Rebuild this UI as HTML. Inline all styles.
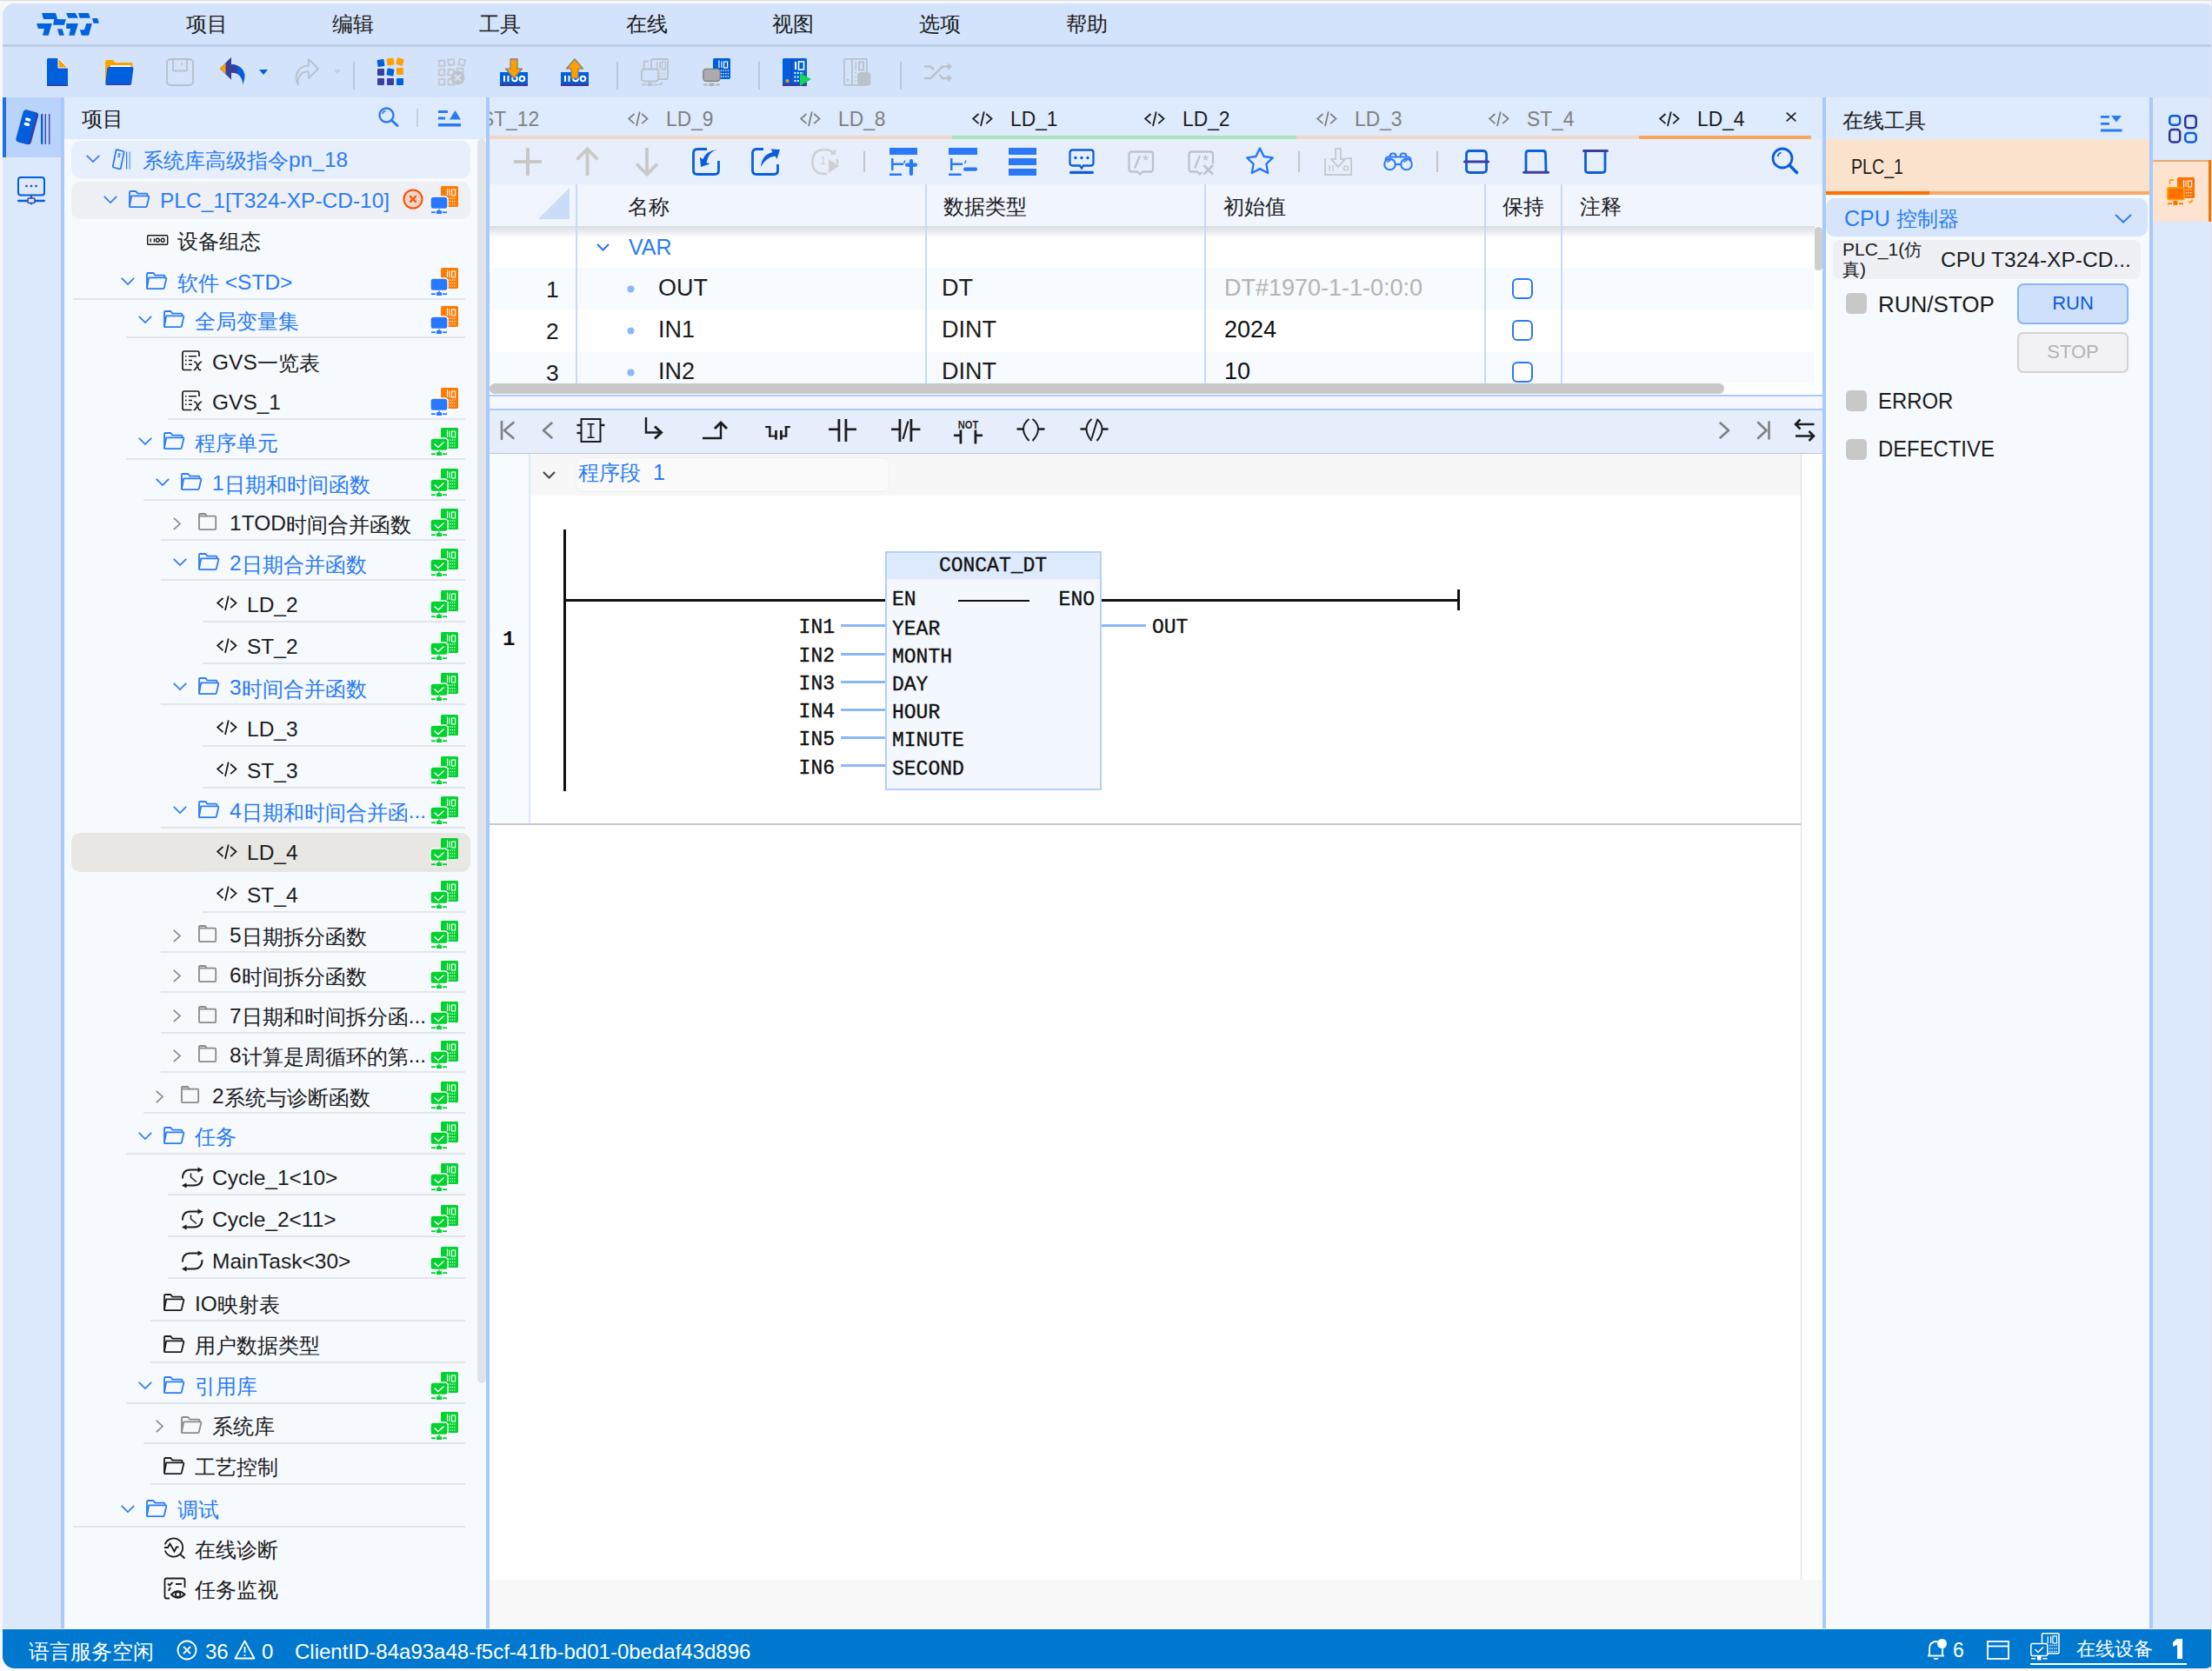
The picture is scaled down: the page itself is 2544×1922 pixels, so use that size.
<!DOCTYPE html>
<html><head><meta charset="utf-8">
<style>
*{margin:0;padding:0;box-sizing:border-box}
html,body{width:2544px;height:1922px;overflow:hidden;background:#f7f7f7;font-family:"Liberation Sans",sans-serif;color:#1c1c1c}
.a{position:absolute}
.t{position:absolute;white-space:nowrap;line-height:1}
svg{position:absolute;overflow:visible}
.m{font-family:"Liberation Mono",monospace}
</style></head><body>
<svg width="0" height="0" style="position:absolute">
<defs>
<symbol id="chd" overflow="visible"><polyline points="0.8,0.8 8,8 15.2,0.8" fill="none" stroke="currentColor" stroke-width="1.7"/></symbol>
<symbol id="chr" overflow="visible"><polyline points="0.8,0.8 8,7.5 0.8,14.2" fill="none" stroke="currentColor" stroke-width="1.7"/></symbol>
<symbol id="fo" overflow="visible"><g fill="none" stroke="currentColor" stroke-width="1.8" stroke-linejoin="round"><path d="M1 18.5V2.2Q1 1 2.2 1H8.3L10.3 3.6H20.3Q21.5 3.6 21.5 4.8V6.4"/><path d="M3.2 6.4H22.3Q23.6 6.4 23.3 7.7L20.8 18.2Q20.5 19.2 19.4 19.2H2.2Q0.8 19.2 1.1 17.9Z"/></g></symbol>
<symbol id="fc" overflow="visible"><g fill="none" stroke="currentColor" stroke-width="1.8" stroke-linejoin="round"><path d="M1 18V2.2Q1 1 2.2 1H8L9.8 3.6H19Q20.2 3.6 20.2 4.8V18Q20.2 19.2 19 19.2H2.2Q1 19.2 1 18Z"/><path d="M1 3.6H9.8"/></g></symbol>
<symbol id="code" overflow="visible"><g fill="none" stroke="currentColor" stroke-width="1.8"><polyline points="7.5,3 1.2,8.6 7.5,14.2"/><line x1="13.8" y1="0.5" x2="10" y2="17"/><polyline points="16.2,3 22.5,8.6 16.2,14.2"/></g></symbol>
<symbol id="stbo" overflow="visible"><rect x="12" y="0" width="20" height="24" rx="1.5" fill="#ff7a00"/><g stroke="#fff" stroke-width="1.1" fill="none"><line x1="19.5" y1="2.5" x2="19.5" y2="11"/><line x1="22" y1="3.5" x2="22" y2="11"/><rect x="24.6" y="4" width="4" height="7"/></g><g stroke="#fff" stroke-width="1.2" stroke-dasharray="1.2 1.2"><line x1="20" y1="14.2" x2="29" y2="14.2"/><line x1="20" y1="17.6" x2="29" y2="17.6"/><line x1="20" y1="21" x2="29" y2="21"/></g><rect x="0" y="12" width="20" height="14.5" rx="3.5" fill="#2878ff" stroke="#fff" stroke-width="1.3"/><rect x="9.2" y="26.5" width="1.6" height="2" fill="#2878ff"/><rect x="7" y="28.2" width="6" height="3.8" fill="#2878ff"/><rect x="1" y="29.3" width="5" height="1.8" fill="#2878ff"/><rect x="14" y="29.3" width="5" height="1.8" fill="#2878ff"/></symbol>
<symbol id="stg" overflow="visible"><rect x="12" y="0" width="20" height="24" rx="1.5" fill="#00d22e"/><g stroke="#fff" stroke-width="1.1" fill="none"><line x1="19.5" y1="2.5" x2="19.5" y2="11"/><line x1="22" y1="3.5" x2="22" y2="11"/><rect x="24.6" y="4" width="4" height="7"/></g><g stroke="#fff" stroke-width="1.2" stroke-dasharray="1.2 1.2"><line x1="20" y1="14.2" x2="29" y2="14.2"/><line x1="20" y1="17.6" x2="29" y2="17.6"/><line x1="20" y1="21" x2="29" y2="21"/></g><rect x="0" y="12" width="20" height="14.5" rx="3.5" fill="#00d22e" stroke="#fff" stroke-width="1.3"/><polyline points="4.5,18.5 9,22.5 15.5,16.5" fill="none" stroke="#fff" stroke-width="1.5"/><rect x="9.2" y="26.5" width="1.6" height="2" fill="#00d22e"/><rect x="7" y="28.2" width="6" height="3.8" fill="#00d22e"/><rect x="1" y="29.3" width="5" height="1.8" fill="#00d22e"/><rect x="14" y="29.3" width="5" height="1.8" fill="#00d22e"/></symbol>
</defs></svg>

<div class="a" style="left:0px;top:0px;width:2544px;height:1px;background:#dcdcdc;"></div>
<div class="a" style="left:3px;top:4px;width:2546px;height:1915px;border-radius:14px;overflow:hidden;background:#d3e3fb"></div>
<div class="a" style="left:3px;top:51px;width:2540px;height:3px;background:#bccde6;"></div>
<div class="a" style="left:3px;top:112px;width:67px;height:1762px;background:#dce8fc;"></div>
<div class="a" style="left:3px;top:112px;width:67px;height:69px;background:#b9d3fa;"></div>
<div class="a" style="left:3px;top:112px;width:4px;height:69px;background:#1f6fe5;"></div>
<div class="a" style="left:70px;top:112px;width:4px;height:1762px;background:#a9c9fb;"></div>
<div class="a" style="left:74px;top:112px;width:485px;height:48px;background:#deeafd;"></div>
<div class="a" style="left:74px;top:160px;width:485px;height:1714px;background:#f6f9fe;"></div>
<div class="a" style="left:549px;top:160px;width:10px;height:1431px;background:#e1e3ea;border-radius:5px"></div>
<div class="a" style="left:559px;top:112px;width:4px;height:1762px;background:#a9c9fb;"></div>
<div class="a" style="left:563px;top:112px;width:1533px;height:48px;background:#deeafd;"></div>
<div class="a" style="left:563px;top:160px;width:1533px;height:52px;background:#e7effc;"></div>
<div class="a" style="left:563px;top:212px;width:1533px;height:48px;background:#f0f5fe;"></div>
<div class="a" style="left:563px;top:260px;width:1533px;height:194px;background:#ffffff;"></div>
<div class="a" style="left:563px;top:454px;width:1533px;height:18px;background:#f5f9ff;border-top:2px solid #a9c9fb;border-bottom:2px solid #a9c9fb"></div>
<div class="a" style="left:563px;top:472px;width:1533px;height:50px;background:#e6eefc;"></div>
<div class="a" style="left:563px;top:522px;width:1533px;height:1295px;background:#ffffff;"></div>
<div class="a" style="left:563px;top:1817px;width:1533px;height:57px;background:#f8f8f8;"></div>
<div class="a" style="left:2096px;top:112px;width:4px;height:1762px;background:#a9c9fb;"></div>
<div class="a" style="left:2100px;top:112px;width:372px;height:48px;background:#deeafd;"></div>
<div class="a" style="left:2100px;top:160px;width:372px;height:64px;background:#fbe2cc;"></div>
<div class="a" style="left:2100px;top:224px;width:372px;height:1650px;background:#f6f9fe;"></div>
<div class="a" style="left:2472px;top:112px;width:4px;height:1762px;background:#a9c9fb;"></div>
<div class="a" style="left:2476px;top:112px;width:67px;height:1762px;background:#dce8fc;"></div>
<div class="a" style="left:3px;top:1874px;width:2546px;height:45px;background:#0078d0;border-radius:0 0 14px 14px"></div>
<div class="t" style="left:213.5px;top:16px;font-size:24px;color:#1c1c1c;">项目</div>
<div class="t" style="left:382.2px;top:16px;font-size:24px;color:#1c1c1c;">编辑</div>
<div class="t" style="left:550.9px;top:16px;font-size:24px;color:#1c1c1c;">工具</div>
<div class="t" style="left:719.6px;top:16px;font-size:24px;color:#1c1c1c;">在线</div>
<div class="t" style="left:888.3px;top:16px;font-size:24px;color:#1c1c1c;">视图</div>
<div class="t" style="left:1057.0px;top:16px;font-size:24px;color:#1c1c1c;">选项</div>
<div class="t" style="left:1225.7px;top:16px;font-size:24px;color:#1c1c1c;">帮助</div>
<div class="a" style="left:82px;top:162px;width:459px;height:43px;background:#e8effc;border-radius:10px"></div>
<div class="a" style="left:82px;top:209px;width:459px;height:43px;background:#eef0f5;border-radius:10px"></div>
<div class="a" style="left:82px;top:958px;width:459px;height:45px;background:#e8e7e4;border-radius:10px"></div>
<svg style="left:99px;top:177.5px;color:#2a7cf6" width="16" height="9"><use href="#chd"/></svg>
<svg style="left:129px;top:171px;" width="23" height="25" viewBox="0 0 23 25"><g fill="none" stroke="#2a7cf6" stroke-width="1.8"><path d="M5.5 1.2L12.8 3Q13.8 3.3 13.6 4.3L9.8 22.6Q9.6 23.6 8.6 23.3L1.6 21.5Q0.6 21.2 0.8 20.2L4.5 1.9Q4.7 1 5.5 1.2Z"/><path d="M7 6L9.6 6.6M6.5 8.5L9 9.1"/><line x1="16.6" y1="3.5" x2="16.6" y2="23.5" stroke-width="1.3"/></g><rect x="19" y="3.5" width="2.3" height="20" fill="#93bbf8"/></svg>
<div class="t" style="left:164px;top:173.0px;font-size:23.5px;color:#2a7cf6;">系统库高级指令<span style="font-size:24.5px;position:relative;top:-1.5px">pn_18</span></div>
<svg style="left:119px;top:224.5px;color:#2a7cf6" width="16" height="9"><use href="#chd"/></svg>
<svg style="left:148px;top:218.5px;color:#2a7cf6" width="24" height="20"><use href="#fo"/></svg>
<div class="t" style="left:184px;top:220.0px;font-size:23.5px;color:#2a7cf6;"><span style="font-size:24.5px;position:relative;top:-1.5px">PLC_1[T324-XP-CD-10]</span></div>
<svg style="left:495px;top:214px;" width="32" height="32" viewBox="0 0 32 32"><use href="#stbo"/></svg>
<svg style="left:169px;top:270px;" width="24" height="12" viewBox="0 0 24 12"><g fill="none" stroke="#1c1c1c" stroke-width="1.4"><rect x="0.7" y="0.7" width="23" height="10.6" rx="1"/><path d="M4.2 4.2V8.6M8.4 4.2V8.6"/><circle cx="12.3" cy="6.3" r="2"/><circle cx="18.2" cy="6.3" r="2"/></g></svg>
<div class="t" style="left:204px;top:267.0px;font-size:23.5px;color:#1c1c1c;">设备组态</div>
<div class="a" style="left:84px;top:343px;width:451px;height:2px;background:#e1e4ea;"></div>
<svg style="left:139px;top:318.6px;color:#2a7cf6" width="16" height="9"><use href="#chd"/></svg>
<svg style="left:168px;top:312.6px;color:#2a7cf6" width="24" height="20"><use href="#fo"/></svg>
<div class="t" style="left:204px;top:314.1px;font-size:23.5px;color:#2a7cf6;">软件<span style="font-size:24.5px;position:relative;top:-1.5px"> &lt;STD&gt;</span></div>
<svg style="left:495px;top:308px;" width="32" height="32" viewBox="0 0 32 32"><use href="#stbo"/></svg>
<div class="a" style="left:145px;top:387px;width:390px;height:2px;background:#e1e4ea;"></div>
<svg style="left:159px;top:363.2px;color:#2a7cf6" width="16" height="9"><use href="#chd"/></svg>
<svg style="left:188px;top:357.2px;color:#2a7cf6" width="24" height="20"><use href="#fo"/></svg>
<div class="t" style="left:224px;top:358.7px;font-size:23.5px;color:#2a7cf6;">全局变量集</div>
<svg style="left:495px;top:352px;" width="32" height="32" viewBox="0 0 32 32"><use href="#stbo"/></svg>
<svg style="left:209px;top:403.0px;" width="25" height="25" viewBox="0 0 25 25"><g fill="none" stroke="#1c1c1c" stroke-width="1.7"><path d="M11.5 22.5H3Q1 22.5 1 20.5V3Q1 1 3 1H18Q20 1 20 3V7"/><path d="M8 6.8H17M8 11.5H12M8 16.2H12" stroke-width="1.6"/></g><g fill="#1c1c1c"><circle cx="4.8" cy="6.8" r="0.9"/><circle cx="4.8" cy="11.5" r="0.9"/><circle cx="4.8" cy="16.2" r="0.9"/></g><path d="M14 13.5Q16.2 12.5 17.3 15.5L19.3 21Q20.3 23.5 22.3 22.2M23.2 13.5Q21.3 12.8 19.8 15.5L16.5 20.5Q15 23.2 13.8 22" fill="none" stroke="#1c1c1c" stroke-width="1.6"/></svg>
<div class="t" style="left:244px;top:406.0px;font-size:23.5px;color:#1c1c1c;"><span style="font-size:24.5px;position:relative;top:-1.5px">GVS</span>一览表</div>
<div class="a" style="left:193px;top:481px;width:342px;height:2px;background:#e1e4ea;"></div>
<svg style="left:209px;top:449.3px;" width="25" height="25" viewBox="0 0 25 25"><g fill="none" stroke="#1c1c1c" stroke-width="1.7"><path d="M11.5 22.5H3Q1 22.5 1 20.5V3Q1 1 3 1H18Q20 1 20 3V7"/><path d="M8 6.8H17M8 11.5H12M8 16.2H12" stroke-width="1.6"/></g><g fill="#1c1c1c"><circle cx="4.8" cy="6.8" r="0.9"/><circle cx="4.8" cy="11.5" r="0.9"/><circle cx="4.8" cy="16.2" r="0.9"/></g><path d="M14 13.5Q16.2 12.5 17.3 15.5L19.3 21Q20.3 23.5 22.3 22.2M23.2 13.5Q21.3 12.8 19.8 15.5L16.5 20.5Q15 23.2 13.8 22" fill="none" stroke="#1c1c1c" stroke-width="1.6"/></svg>
<div class="t" style="left:244px;top:452.3px;font-size:23.5px;color:#1c1c1c;"><span style="font-size:24.5px;position:relative;top:-1.5px">GVS_1</span></div>
<svg style="left:495px;top:446px;" width="32" height="32" viewBox="0 0 32 32"><use href="#stbo"/></svg>
<div class="a" style="left:145px;top:527px;width:390px;height:2px;background:#e1e4ea;"></div>
<svg style="left:159px;top:503.20000000000005px;color:#2a7cf6" width="16" height="9"><use href="#chd"/></svg>
<svg style="left:188px;top:497.20000000000005px;color:#2a7cf6" width="24" height="20"><use href="#fo"/></svg>
<div class="t" style="left:224px;top:498.70000000000005px;font-size:23.5px;color:#2a7cf6;">程序单元</div>
<svg style="left:495px;top:492px;" width="32" height="32" viewBox="0 0 32 32"><use href="#stg"/></svg>
<div class="a" style="left:165px;top:574px;width:370px;height:2px;background:#e1e4ea;"></div>
<svg style="left:179px;top:550.3px;color:#2a7cf6" width="16" height="9"><use href="#chd"/></svg>
<svg style="left:208px;top:544.3px;color:#2a7cf6" width="24" height="20"><use href="#fo"/></svg>
<div class="t" style="left:244px;top:545.8px;font-size:23.5px;color:#2a7cf6;"><span style="font-size:24.5px;position:relative;top:-1.5px">1</span>日期和时间函数</div>
<svg style="left:495px;top:539px;" width="32" height="32" viewBox="0 0 32 32"><use href="#stg"/></svg>
<div class="a" style="left:185px;top:620px;width:350px;height:2px;background:#e1e4ea;"></div>
<svg style="left:199px;top:594.8px;color:#8a8a8a" width="9" height="15"><use href="#chr"/></svg>
<svg style="left:228px;top:590.3px;color:#8a8a8a" width="21" height="20"><use href="#fc"/></svg>
<div class="t" style="left:264px;top:591.8px;font-size:23.5px;color:#1c1c1c;"><span style="font-size:24.5px;position:relative;top:-1.5px">1TOD</span>时间合并函数</div>
<svg style="left:495px;top:585px;" width="32" height="32" viewBox="0 0 32 32"><use href="#stg"/></svg>
<div class="a" style="left:185px;top:666px;width:350px;height:2px;background:#e1e4ea;"></div>
<svg style="left:199px;top:642.4px;color:#2a7cf6" width="16" height="9"><use href="#chd"/></svg>
<svg style="left:228px;top:636.4px;color:#2a7cf6" width="24" height="20"><use href="#fo"/></svg>
<div class="t" style="left:264px;top:637.9px;font-size:23.5px;color:#2a7cf6;"><span style="font-size:24.5px;position:relative;top:-1.5px">2</span>日期合并函数</div>
<svg style="left:495px;top:631px;" width="32" height="32" viewBox="0 0 32 32"><use href="#stg"/></svg>
<div class="a" style="left:233px;top:714px;width:302px;height:2px;background:#e1e4ea;"></div>
<svg style="left:249px;top:685.3px;color:#1c1c1c" width="24" height="17"><use href="#code"/></svg>
<div class="t" style="left:284px;top:685.3px;font-size:23.5px;color:#1c1c1c;"><span style="font-size:24.5px;position:relative;top:-1.5px">LD_2</span></div>
<svg style="left:495px;top:679px;" width="32" height="32" viewBox="0 0 32 32"><use href="#stg"/></svg>
<div class="a" style="left:233px;top:762px;width:302px;height:2px;background:#e1e4ea;"></div>
<svg style="left:249px;top:733.5px;color:#1c1c1c" width="24" height="17"><use href="#code"/></svg>
<div class="t" style="left:284px;top:733.5px;font-size:23.5px;color:#1c1c1c;"><span style="font-size:24.5px;position:relative;top:-1.5px">ST_2</span></div>
<svg style="left:495px;top:727px;" width="32" height="32" viewBox="0 0 32 32"><use href="#stg"/></svg>
<div class="a" style="left:185px;top:809px;width:350px;height:2px;background:#e1e4ea;"></div>
<svg style="left:199px;top:785.1px;color:#2a7cf6" width="16" height="9"><use href="#chd"/></svg>
<svg style="left:228px;top:779.1px;color:#2a7cf6" width="24" height="20"><use href="#fo"/></svg>
<div class="t" style="left:264px;top:780.6px;font-size:23.5px;color:#2a7cf6;"><span style="font-size:24.5px;position:relative;top:-1.5px">3</span>时间合并函数</div>
<svg style="left:495px;top:774px;" width="32" height="32" viewBox="0 0 32 32"><use href="#stg"/></svg>
<div class="a" style="left:233px;top:857px;width:302px;height:2px;background:#e1e4ea;"></div>
<svg style="left:249px;top:828.3px;color:#1c1c1c" width="24" height="17"><use href="#code"/></svg>
<div class="t" style="left:284px;top:828.3px;font-size:23.5px;color:#1c1c1c;"><span style="font-size:24.5px;position:relative;top:-1.5px">LD_3</span></div>
<svg style="left:495px;top:822px;" width="32" height="32" viewBox="0 0 32 32"><use href="#stg"/></svg>
<div class="a" style="left:233px;top:905px;width:302px;height:2px;background:#e1e4ea;"></div>
<svg style="left:249px;top:876.2px;color:#1c1c1c" width="24" height="17"><use href="#code"/></svg>
<div class="t" style="left:284px;top:876.2px;font-size:23.5px;color:#1c1c1c;"><span style="font-size:24.5px;position:relative;top:-1.5px">ST_3</span></div>
<svg style="left:495px;top:870px;" width="32" height="32" viewBox="0 0 32 32"><use href="#stg"/></svg>
<div class="a" style="left:185px;top:951px;width:350px;height:2px;background:#e1e4ea;"></div>
<svg style="left:199px;top:927.3px;color:#2a7cf6" width="16" height="9"><use href="#chd"/></svg>
<svg style="left:228px;top:921.3px;color:#2a7cf6" width="24" height="20"><use href="#fo"/></svg>
<div class="t" style="left:264px;top:922.8px;font-size:23.5px;color:#2a7cf6;"><span style="font-size:24.5px;position:relative;top:-1.5px">4</span>日期和时间合并函<span style="font-size:24.5px;position:relative;top:-1.5px">...</span></div>
<svg style="left:495px;top:916px;" width="32" height="32" viewBox="0 0 32 32"><use href="#stg"/></svg>
<div class="a" style="left:233px;top:999px;width:302px;height:2px;background:#e1e4ea;"></div>
<svg style="left:249px;top:970.5px;color:#1c1c1c" width="24" height="17"><use href="#code"/></svg>
<div class="t" style="left:284px;top:970.5px;font-size:23.5px;color:#1c1c1c;"><span style="font-size:24.5px;position:relative;top:-1.5px">LD_4</span></div>
<svg style="left:495px;top:964px;" width="32" height="32" viewBox="0 0 32 32"><use href="#stg"/></svg>
<div class="a" style="left:233px;top:1048px;width:302px;height:2px;background:#e1e4ea;"></div>
<svg style="left:249px;top:1019.2px;color:#1c1c1c" width="24" height="17"><use href="#code"/></svg>
<div class="t" style="left:284px;top:1019.2px;font-size:23.5px;color:#1c1c1c;"><span style="font-size:24.5px;position:relative;top:-1.5px">ST_4</span></div>
<svg style="left:495px;top:1013px;" width="32" height="32" viewBox="0 0 32 32"><use href="#stg"/></svg>
<div class="a" style="left:185px;top:1094px;width:350px;height:2px;background:#e1e4ea;"></div>
<svg style="left:199px;top:1068.8px;color:#8a8a8a" width="9" height="15"><use href="#chr"/></svg>
<svg style="left:228px;top:1064.3px;color:#8a8a8a" width="21" height="20"><use href="#fc"/></svg>
<div class="t" style="left:264px;top:1065.8px;font-size:23.5px;color:#1c1c1c;"><span style="font-size:24.5px;position:relative;top:-1.5px">5</span>日期拆分函数</div>
<svg style="left:495px;top:1059px;" width="32" height="32" viewBox="0 0 32 32"><use href="#stg"/></svg>
<div class="a" style="left:185px;top:1140px;width:350px;height:2px;background:#e1e4ea;"></div>
<svg style="left:199px;top:1114.9px;color:#8a8a8a" width="9" height="15"><use href="#chr"/></svg>
<svg style="left:228px;top:1110.4px;color:#8a8a8a" width="21" height="20"><use href="#fc"/></svg>
<div class="t" style="left:264px;top:1111.9px;font-size:23.5px;color:#1c1c1c;"><span style="font-size:24.5px;position:relative;top:-1.5px">6</span>时间拆分函数</div>
<svg style="left:495px;top:1105px;" width="32" height="32" viewBox="0 0 32 32"><use href="#stg"/></svg>
<div class="a" style="left:185px;top:1187px;width:350px;height:2px;background:#e1e4ea;"></div>
<svg style="left:199px;top:1161.0px;color:#8a8a8a" width="9" height="15"><use href="#chr"/></svg>
<svg style="left:228px;top:1156.5px;color:#8a8a8a" width="21" height="20"><use href="#fc"/></svg>
<div class="t" style="left:264px;top:1158.0px;font-size:23.5px;color:#1c1c1c;"><span style="font-size:24.5px;position:relative;top:-1.5px">7</span>日期和时间拆分函<span style="font-size:24.5px;position:relative;top:-1.5px">...</span></div>
<svg style="left:495px;top:1152px;" width="32" height="32" viewBox="0 0 32 32"><use href="#stg"/></svg>
<div class="a" style="left:185px;top:1232px;width:350px;height:2px;background:#e1e4ea;"></div>
<svg style="left:199px;top:1206.5px;color:#8a8a8a" width="9" height="15"><use href="#chr"/></svg>
<svg style="left:228px;top:1202px;color:#8a8a8a" width="21" height="20"><use href="#fc"/></svg>
<div class="t" style="left:264px;top:1203.5px;font-size:23.5px;color:#1c1c1c;"><span style="font-size:24.5px;position:relative;top:-1.5px">8</span>计算是周循环的第<span style="font-size:24.5px;position:relative;top:-1.5px">...</span></div>
<svg style="left:495px;top:1197px;" width="32" height="32" viewBox="0 0 32 32"><use href="#stg"/></svg>
<div class="a" style="left:165px;top:1279px;width:370px;height:2px;background:#e1e4ea;"></div>
<svg style="left:179px;top:1253.9px;color:#8a8a8a" width="9" height="15"><use href="#chr"/></svg>
<svg style="left:208px;top:1249.4px;color:#8a8a8a" width="21" height="20"><use href="#fc"/></svg>
<div class="t" style="left:244px;top:1250.9px;font-size:23.5px;color:#1c1c1c;"><span style="font-size:24.5px;position:relative;top:-1.5px">2</span>系统与诊断函数</div>
<svg style="left:495px;top:1244px;" width="32" height="32" viewBox="0 0 32 32"><use href="#stg"/></svg>
<div class="a" style="left:145px;top:1326px;width:390px;height:2px;background:#e1e4ea;"></div>
<svg style="left:159px;top:1301.5px;color:#2a7cf6" width="16" height="9"><use href="#chd"/></svg>
<svg style="left:188px;top:1295.5px;color:#2a7cf6" width="24" height="20"><use href="#fo"/></svg>
<div class="t" style="left:224px;top:1297.0px;font-size:23.5px;color:#2a7cf6;">任务</div>
<svg style="left:495px;top:1290px;" width="32" height="32" viewBox="0 0 32 32"><use href="#stg"/></svg>
<div class="a" style="left:193px;top:1373px;width:342px;height:2px;background:#e1e4ea;"></div>
<svg style="left:209px;top:1343.4px;" width="25" height="25" viewBox="0 0 25 25"><g fill="none" stroke="#1c1c1c" stroke-width="1.9"><path d="M1 12.5Q1 2.5 10 2.5H20"/><path d="M23.5 10Q23.5 20.5 14 20.5H4"/><path d="M10.5 6.5V11L17 16.5" stroke-width="1.5"/></g><g fill="#1c1c1c"><polygon points="18.5,-0.5 24.2,2.5 18.5,5.5"/><polygon points="5.5,17.5 0,20.5 5.5,23.5"/></g></svg>
<div class="t" style="left:244px;top:1344.9px;font-size:23.5px;color:#1c1c1c;"><span style="font-size:24.5px;position:relative;top:-1.5px">Cycle_1&lt;10&gt;</span></div>
<svg style="left:495px;top:1338px;" width="32" height="32" viewBox="0 0 32 32"><use href="#stg"/></svg>
<div class="a" style="left:193px;top:1421px;width:342px;height:2px;background:#e1e4ea;"></div>
<svg style="left:209px;top:1391px;" width="25" height="25" viewBox="0 0 25 25"><g fill="none" stroke="#1c1c1c" stroke-width="1.9"><path d="M1 12.5Q1 2.5 10 2.5H20"/><path d="M23.5 10Q23.5 20.5 14 20.5H4"/><path d="M10.5 6.5V11L17 16.5" stroke-width="1.5"/></g><g fill="#1c1c1c"><polygon points="18.5,-0.5 24.2,2.5 18.5,5.5"/><polygon points="5.5,17.5 0,20.5 5.5,23.5"/></g></svg>
<div class="t" style="left:244px;top:1392.5px;font-size:23.5px;color:#1c1c1c;"><span style="font-size:24.5px;position:relative;top:-1.5px">Cycle_2&lt;11&gt;</span></div>
<svg style="left:495px;top:1386px;" width="32" height="32" viewBox="0 0 32 32"><use href="#stg"/></svg>
<div class="a" style="left:193px;top:1469px;width:342px;height:2px;background:#e1e4ea;"></div>
<svg style="left:209px;top:1439px;" width="25" height="25" viewBox="0 0 25 25"><g fill="none" stroke="#1c1c1c" stroke-width="1.9"><path d="M1 12.5Q1 2.5 10 2.5H20"/><path d="M23.5 10Q23.5 20.5 14 20.5H4"/></g><g fill="#1c1c1c"><polygon points="18.5,-0.5 24.2,2.5 18.5,5.5"/><polygon points="5.5,17.5 0,20.5 5.5,23.5"/></g></svg>
<div class="t" style="left:244px;top:1440.5px;font-size:23.5px;color:#1c1c1c;"><span style="font-size:24.5px;position:relative;top:-1.5px">MainTask&lt;30&gt;</span></div>
<svg style="left:495px;top:1434px;" width="32" height="32" viewBox="0 0 32 32"><use href="#stg"/></svg>
<div class="a" style="left:173px;top:1518px;width:362px;height:2px;background:#e1e4ea;"></div>
<svg style="left:188px;top:1487.7px;color:#1c1c1c" width="24" height="20"><use href="#fo"/></svg>
<div class="t" style="left:224px;top:1489.2px;font-size:23.5px;color:#1c1c1c;"><span style="font-size:24.5px;position:relative;top:-1.5px">IO</span>映射表</div>
<div class="a" style="left:173px;top:1566px;width:362px;height:2px;background:#e1e4ea;"></div>
<svg style="left:188px;top:1535.9px;color:#1c1c1c" width="24" height="20"><use href="#fo"/></svg>
<div class="t" style="left:224px;top:1537.4px;font-size:23.5px;color:#1c1c1c;">用户数据类型</div>
<div class="a" style="left:145px;top:1613px;width:390px;height:2px;background:#e1e4ea;"></div>
<svg style="left:159px;top:1588.5px;color:#2a7cf6" width="16" height="9"><use href="#chd"/></svg>
<svg style="left:188px;top:1582.5px;color:#2a7cf6" width="24" height="20"><use href="#fo"/></svg>
<div class="t" style="left:224px;top:1584.0px;font-size:23.5px;color:#2a7cf6;">引用库</div>
<svg style="left:495px;top:1578px;" width="32" height="32" viewBox="0 0 32 32"><use href="#stg"/></svg>
<div class="a" style="left:165px;top:1659px;width:370px;height:2px;background:#e1e4ea;"></div>
<svg style="left:179px;top:1633.1px;color:#8a8a8a" width="9" height="15"><use href="#chr"/></svg>
<svg style="left:208px;top:1628.6px;color:#8a8a8a" width="24" height="20"><use href="#fo"/></svg>
<div class="t" style="left:244px;top:1630.1px;font-size:23.5px;color:#1c1c1c;">系统库</div>
<svg style="left:495px;top:1624px;" width="32" height="32" viewBox="0 0 32 32"><use href="#stg"/></svg>
<div class="a" style="left:173px;top:1706px;width:362px;height:2px;background:#e1e4ea;"></div>
<svg style="left:188px;top:1675.5px;color:#1c1c1c" width="24" height="20"><use href="#fo"/></svg>
<div class="t" style="left:224px;top:1677.0px;font-size:23.5px;color:#1c1c1c;">工艺控制</div>
<div class="a" style="left:84px;top:1755px;width:451px;height:2px;background:#e1e4ea;"></div>
<svg style="left:139px;top:1730.7px;color:#2a7cf6" width="16" height="9"><use href="#chd"/></svg>
<svg style="left:168px;top:1724.7px;color:#2a7cf6" width="24" height="20"><use href="#fo"/></svg>
<div class="t" style="left:204px;top:1726.2px;font-size:23.5px;color:#2a7cf6;">调试</div>
<svg style="left:188px;top:1768px;" width="26" height="26" viewBox="0 0 26 26"><g fill="none" stroke="#1c1c1c" stroke-width="1.8"><path d="M1.8 8.5A10.5 10.5 0 1 1 1.8 15.5"/><path d="M19 19.5L24.5 24.5"/><path d="M1 12H5L7.5 7.5L12.5 16.5L15 11.5H17.5"/></g></svg>
<div class="t" style="left:224px;top:1771.5px;font-size:23.5px;color:#1c1c1c;">在线诊断</div>
<svg style="left:188px;top:1814px;" width="26" height="26" viewBox="0 0 26 26"><g fill="none" stroke="#1c1c1c" stroke-width="1.8"><path d="M7 24.5H3.5Q1.5 24.5 1.5 22.5V3.5Q1.5 1.5 3.5 1.5H22.5Q24.5 1.5 24.5 3.5V12"/><path d="M5 7.5L7 9.5L10.5 6M14 8H21"/><path d="M8.5 12.5Q6.3 13 6.2 16"/><path d="M9 20Q16.5 12.5 24.5 20Q16.5 27.5 9 20Z"/><circle cx="16.7" cy="20" r="2.8"/></g></svg>
<div class="t" style="left:224px;top:1817.5px;font-size:23.5px;color:#1c1c1c;">任务监视</div>
<svg style="left:463px;top:217px;" width="24" height="24" viewBox="0 0 24 24"><circle cx="12" cy="12" r="10.5" fill="#f2d8cc" stroke="#ff4d00" stroke-width="2"/><path d="M8.3 8.3L15.7 15.7M15.7 8.3L8.3 15.7" stroke="#ff4d00" stroke-width="2.2"/></svg>
<svg style="left:0px;top:0px;" width="120" height="50" viewBox="0 0 120 50"><g fill="#0062de"><polygon points="48,15.1 64.1,15.1 66.1,22 50,22"/><polygon points="62.4,22 75.9,22.2 73.8,28.7 61,28.7"/><polygon points="42.1,27.1 59.8,27.1 55.7,40.8 49,40.8 51,33 43.9,33"/><polygon points="66.1,33.2 71.6,33.2 73.8,40.8 68.1,40.8"/><polygon points="76.1,15.1 86.7,15.1 89.9,20.8 78.5,20.8"/><polygon points="76.3,27.1 89.9,27.1 85.8,40.8 79.3,40.8 81.2,33 76.3,33"/><polygon points="90.1,15.1 101.9,15.1 103.9,20.8 91.7,20.8"/><polygon points="106,21 112.1,21 113.9,26.7 107.6,26.7"/><polygon points="99.3,27.1 105.8,27.1 102.1,40.8 93.8,40.8 91.9,34.2 97,34.2"/></g></svg>
<svg style="left:54px;top:67px;" width="24" height="32" viewBox="0 0 24 32"><path d="M1.5 0H13L24 11V30.5Q24 32 22.5 32H1.5Q0 32 0 30.5V1.5Q0 0 1.5 0Z" fill="#005fdc"/><rect x="0" y="30.5" width="24" height="1.5" fill="#3a3ea0"/><path d="M13 0L24 11H13Z" fill="#ffa000" stroke="#fff" stroke-width="1"/></svg>
<svg style="left:121px;top:69px;" width="33" height="30" viewBox="0 0 33 30"><path d="M0 2Q0 0 2 0H9L11.5 3H30Q31.5 3 31.5 4.5V10H0Z" fill="#ffa000"/><rect x="0" y="3" width="5" height="22" fill="#ffa000"/><path d="M6 6H29.5V12H6Z" fill="#fff"/><path d="M4.5 8H30.5Q32.8 8 32.4 10.3L30.2 26.8Q29.8 29 27.6 29H2.4Q0 29 0.3 26.6L2.2 10.2Q2.5 8 4.5 8Z" fill="#005fdc"/><path d="M0.4 26.5Q0.3 29 2.4 29H27.6Q29.8 29 30.2 26.8L30 27.5H0.5Z" fill="#3a3ea0"/></svg>
<svg style="left:191px;top:67px;" width="32" height="32" viewBox="0 0 32 32"><g fill="none" stroke="#bac1cc" stroke-width="2"><rect x="1" y="1" width="30" height="30" rx="4"/><path d="M8 1V13Q8 14.5 9.5 14.5H22.5Q24 14.5 24 13V1"/><line x1="18" y1="5" x2="18" y2="8" stroke-width="1.5"/></g></svg>
<svg style="left:253px;top:66px;" width="30" height="32" viewBox="0 0 30 32"><path d="M13 0V8Q26 8.5 28.5 20Q29 25 26 32Q26.5 26 23 21.5Q19.5 17.5 13 17.5V25.5L0 12.7Z" fill="#005fdc"/><path d="M13 0V25.5L0 12.7Z" fill="#3a3ea0"/><path d="M6.5 6.3V19.2L0 12.7Z" fill="#ffa000"/><path d="M13 8Q17 8.2 20 9.5V18.5Q17 17.5 13 17.5Z" fill="#3a3ea0"/></svg>
<svg style="left:298px;top:80px;" width="10" height="7" viewBox="0 0 10 7"><polygon points="0,0 10,0 5,6" fill="#005fdc"/></svg>
<svg style="left:339px;top:67px;" width="28" height="31" viewBox="0 0 28 31"><path d="M16 1V8.5Q4 9 1.8 19.5Q0.8 25 4 30.5Q2.5 23 7 18.5Q10.5 15 16 15.5V23L27 12Z" fill="none" stroke="#bac1cc" stroke-width="1.8" stroke-linejoin="round"/></svg>
<svg style="left:384px;top:80px;" width="8" height="6" viewBox="0 0 8 6"><polygon points="0,0 8,0 4,5" fill="#c3d0e4"/></svg>
<div class="a" style="left:406px;top:71px;width:2px;height:32px;background:#bac6da;"></div>
<svg style="left:434px;top:67px;" width="32" height="32" viewBox="0 0 32 32"><g><rect x="0" y="1.5" width="8" height="8" rx="1" fill="#005fdc" transform="rotate(-8 4 5.5)"/><rect x="11" y="0" width="8" height="8" rx="1" fill="#ffa000" transform="rotate(-8 15 4)"/><rect x="22" y="0" width="8" height="8" rx="1" fill="#ffa000" transform="rotate(15 26 4)"/><rect x="0" y="12" width="8" height="8" rx="1" fill="#3a3ea0" transform="rotate(0 4 16)"/><rect x="11" y="12" width="8" height="8" rx="1" fill="#005fdc" transform="rotate(8 15 16)"/><rect x="22" y="11" width="8" height="8" rx="1" fill="#ffa000" transform="rotate(0 26 15)"/><rect x="0" y="23" width="8" height="8" rx="1" fill="#3a3ea0" transform="rotate(0 4 27)"/><rect x="11" y="23" width="8" height="8" rx="1" fill="#3a3ea0" transform="rotate(0 15 27)"/><rect x="22" y="23" width="8" height="8" rx="1" fill="#005fdc" transform="rotate(0 26 27)"/></g></svg>
<svg style="left:504px;top:67px;" width="32" height="32" viewBox="0 0 32 32"><g fill="none" stroke="#bfc4cc" stroke-width="1.6"><rect x="0.8" y="2.5" width="6.5" height="6.5" transform="rotate(-8 3.8 5.5)"/><rect x="11.5" y="1.3" width="6.5" height="6.5" transform="rotate(-8 14.5 4.3)"/><rect x="24" y="1.3" width="6.5" height="6.5" transform="rotate(15 27 4.3)"/><rect x="0.8" y="13" width="6.5" height="6.5" transform="rotate(0 3.8 16)"/><rect x="11.5" y="13" width="6.5" height="6.5" transform="rotate(8 14.5 16)"/><rect x="22" y="11.5" width="6.5" height="6.5" transform="rotate(0 25 14.5)"/><rect x="0.8" y="24" width="6.5" height="6.5" transform="rotate(0 3.8 27)"/><rect x="11.5" y="24" width="6.5" height="6.5" transform="rotate(0 14.5 27)"/></g><circle cx="22.5" cy="22.5" r="8" fill="#bfc4cc"/><path d="M19 19L26 26M26 19L19 26" stroke="#d3e3fb" stroke-width="2"/></svg>
<svg style="left:575px;top:67px;" width="32" height="32" viewBox="0 0 32 32"><rect x="0" y="16" width="32" height="16" fill="#005fdc"/><rect x="0" y="29" width="32" height="3" fill="#3a3ea0"/><g fill="none" stroke="#fff" stroke-width="2"><line x1="5" y1="20" x2="5" y2="27"/><line x1="9.5" y1="20" x2="9.5" y2="27"/><circle cx="17" cy="23.5" r="2.8"/><circle cx="25.5" cy="23.5" r="2.8"/></g><path d="M12 0.8H20V12H25.5L16 23L6.5 12H12Z" fill="#ffa000" stroke="#7a7a7a" stroke-width="1.2" stroke-linejoin="round"/></svg>
<svg style="left:645px;top:67px;" width="32" height="32" viewBox="0 0 32 32"><rect x="0" y="16" width="32" height="16" fill="#005fdc"/><rect x="0" y="29" width="32" height="3" fill="#3a3ea0"/><g fill="none" stroke="#fff" stroke-width="2"><line x1="5" y1="20" x2="5" y2="27"/><line x1="9.5" y1="20" x2="9.5" y2="27"/><circle cx="17" cy="23.5" r="2.8"/><circle cx="25.5" cy="23.5" r="2.8"/></g><path d="M12 23H20V12H25.5L16 0.8L6.5 12H12Z" fill="#ffa000" stroke="#7a7a7a" stroke-width="1.2" stroke-linejoin="round"/></svg>
<div class="a" style="left:709px;top:71px;width:2px;height:32px;background:#bac6da;"></div>
<svg style="left:737px;top:67px;" width="32" height="32" viewBox="0 0 32 32"><g fill="none" stroke="#bac1cc" stroke-width="1.8"><path d="M3.5 12V5Q3.5 3.5 5 3.5H9"/><rect x="12" y="1" width="19" height="23" rx="1"/><rect x="0.9" y="12.5" width="19" height="14" rx="3" fill="#d3e3fb"/><line x1="10.5" y1="26.5" x2="10.5" y2="29"/><path d="M24 27.5V29Q24 30 22.5 30H21"/></g><g fill="#bac1cc"><rect x="7.5" y="28.5" width="6" height="3.5"/><rect x="1" y="29.5" width="5" height="1.8"/><rect x="15" y="29.5" width="5" height="1.8"/><rect x="18" y="4" width="1.5" height="8"/><rect x="21.5" y="4" width="1.5" height="8"/><rect x="24.5" y="4" width="4" height="8" fill="none" stroke="#bac1cc" stroke-width="1.3"/></g><g stroke="#bac1cc" stroke-width="1.4" stroke-dasharray="1.3 1.3"><line x1="21" y1="14" x2="29" y2="14"/><line x1="21" y1="17.5" x2="29" y2="17.5"/><line x1="21" y1="21" x2="29" y2="21"/></g></svg>
<svg style="left:808px;top:67px;" width="32" height="32" viewBox="0 0 32 32"><rect x="12" y="0" width="20" height="24" rx="1.5" fill="#005fdc"/><g stroke="#fff" stroke-width="1.2" fill="none"><line x1="19" y1="2.5" x2="19" y2="11"/><line x1="22" y1="3.5" x2="22" y2="11"/><rect x="24.6" y="4" width="4" height="7"/></g><g stroke="#fff" stroke-width="1.3" stroke-dasharray="1.3 1.3"><line x1="21" y1="14.2" x2="30" y2="14.2"/><line x1="21" y1="17.6" x2="30" y2="17.6"/><line x1="21" y1="21" x2="30" y2="21"/></g><rect x="0.8" y="12.3" width="19.4" height="14" rx="3.5" fill="#ababab" stroke="#7d7d7d" stroke-width="1.3"/><g fill="#b0b0b0"><rect x="7.5" y="28.5" width="6" height="3.5"/><rect x="1" y="29.5" width="5" height="1.8"/><rect x="15" y="29.5" width="5" height="1.8"/></g></svg>
<div class="a" style="left:872px;top:71px;width:2px;height:32px;background:#bac6da;"></div>
<svg style="left:900px;top:67px;" width="33" height="32" viewBox="0 0 33 32"><rect x="0" y="0" width="28" height="32" rx="1.5" fill="#005fdc"/><rect x="0" y="29" width="28" height="3" fill="#3a3ea0"/><rect x="9.8" y="1" width="1.2" height="28" fill="#3a3ea0"/><circle cx="5.5" cy="26" r="2" fill="#ffa000"/><g fill="#fff"><rect x="14" y="4" width="2" height="9"/><rect x="18.5" y="4" width="6" height="9" fill="none" stroke="#fff" stroke-width="1.6"/></g><g stroke="#fff" stroke-width="1.8" stroke-dasharray="1.8 1.5"><line x1="13.5" y1="17" x2="24" y2="17"/><line x1="13.5" y1="21.5" x2="24" y2="21.5"/><line x1="13.5" y1="26" x2="24" y2="26"/></g><polygon points="20,17 33,24 20,32" fill="#14d45a"/></svg>
<svg style="left:970px;top:67px;" width="32" height="32" viewBox="0 0 32 32"><g fill="none" stroke="#bac1cc" stroke-width="1.8"><rect x="0.9" y="0.9" width="26" height="30" rx="1"/><line x1="10" y1="1" x2="10" y2="31"/><rect x="18" y="4.5" width="5" height="9"/></g><g fill="#bac1cc"><rect x="13.5" y="4" width="1.5" height="9.5"/><circle cx="5" cy="25" r="1.6"/><rect x="13" y="16" width="1.5" height="1.5"/><rect x="13" y="20.5" width="1.5" height="1.5"/><rect x="13" y="25" width="1.5" height="1.5"/><rect x="16" y="16" width="15.5" height="15.5" rx="4"/></g></svg>
<div class="a" style="left:1035px;top:71px;width:2px;height:32px;background:#bac6da;"></div>
<svg style="left:1063px;top:72px;" width="32" height="23" viewBox="0 0 32 23"><g fill="none" stroke="#bac1cc" stroke-width="2.5"><path d="M0 4.5H7.5L11 8"/><path d="M0 18H7.5L21 4.5H28"/><path d="M17.5 14L21 18H28"/></g><g fill="#bac1cc"><polygon points="27,0 32,4.5 27,9"/><polygon points="27,13.5 32,18 27,22.5"/></g></svg>
<svg style="left:17px;top:126px;" width="42" height="42" viewBox="0 0 42 42"><g transform="rotate(15 13 21)"><rect x="6" y="1" width="17" height="38" rx="3.5" fill="#3a3ea0"/><rect x="5" y="1" width="15.5" height="38" rx="3.5" fill="#005fdc"/><rect x="9.5" y="9.5" width="6.5" height="3.5" rx="1.75" fill="#fff"/><rect x="9.5" y="15" width="6.5" height="3.5" rx="1.75" fill="#fff"/></g><rect x="30" y="5" width="2.3" height="35" rx="1" fill="#005fdc"/><rect x="34.6" y="5" width="1.3" height="35" fill="#3a3ea0"/><rect x="39.1" y="5" width="1.3" height="35" fill="#3a3ea0"/></svg>
<svg style="left:20px;top:203px;" width="32" height="34" viewBox="0 0 32 34"><rect x="1" y="1" width="30" height="20.5" rx="3" fill="none" stroke="#005fdc" stroke-width="2"/><g fill="#3a3ea0"><circle cx="10.5" cy="11" r="1.3"/><circle cx="16" cy="11" r="1.3"/><circle cx="21.5" cy="11" r="1.3"/></g><rect x="15" y="21.5" width="2" height="4" fill="#005fdc"/><rect x="0" y="26.8" width="32" height="2.4" rx="1.2" fill="#005fdc"/><rect x="12" y="25" width="8" height="5.5" rx="1" fill="#dce8fc" stroke="#3a3ea0" stroke-width="1.5"/><polygon points="14.5,30.5 17.5,30.5 16,33" fill="#005fdc"/></svg>
<div class="t" style="left:94px;top:125px;font-size:24px;color:#1c1c1c;">项目</div>
<svg style="left:435px;top:123px;" width="24" height="23" viewBox="0 0 24 23"><circle cx="9.5" cy="9.5" r="8" fill="none" stroke="#2a7cf6" stroke-width="2.4"/><path d="M15.5 15.5L22 21.5" stroke="#2a7cf6" stroke-width="3" stroke-linecap="round"/><path d="M5 8Q5.5 5 8.5 4.5" fill="none" stroke="#2a7cf6" stroke-width="1.5"/></svg>
<div class="a" style="left:479px;top:125px;width:2px;height:21px;background:#c5cfdd;"></div>
<svg style="left:504px;top:126px;" width="26" height="20" viewBox="0 0 26 20"><g fill="#2a7cf6"><rect x="0" y="1" width="11" height="3"/><rect x="0" y="8.5" width="8" height="3"/><rect x="0" y="16" width="26" height="3.5"/><polygon points="13,11.5 19.5,1 26,11.5"/></g></svg>
<div class="a" style="left:563px;top:112px;width:1533px;height:48px;overflow:hidden">
<div class="a" style="left:-62px;top:44px;width:198px;height:4px;background:#f3d6c8"></div>
<svg style="left:-39px;top:16px;color:#808080" width="24" height="17"><use href="#code"/></svg>
<div class="t" style="left:-10px;top:13px;font-size:24.5px;color:#808080;transform:scaleX(0.93);transform-origin:0 0">ST_12</div>
<div class="a" style="left:136px;top:44px;width:198px;height:4px;background:#f3d6c8"></div>
<svg style="left:159px;top:16px;color:#808080" width="24" height="17"><use href="#code"/></svg>
<div class="t" style="left:203px;top:13px;font-size:24.5px;color:#808080;transform:scaleX(0.93);transform-origin:0 0">LD_9</div>
<div class="a" style="left:334px;top:44px;width:198px;height:4px;background:#f3d6c8"></div>
<svg style="left:357px;top:16px;color:#808080" width="24" height="17"><use href="#code"/></svg>
<div class="t" style="left:401px;top:13px;font-size:24.5px;color:#808080;transform:scaleX(0.93);transform-origin:0 0">LD_8</div>
<div class="a" style="left:532px;top:44px;width:198px;height:4px;background:#a8e2b9"></div>
<svg style="left:555px;top:16px;color:#1c1c1c" width="24" height="17"><use href="#code"/></svg>
<div class="t" style="left:599px;top:13px;font-size:24.5px;color:#1c1c1c;transform:scaleX(0.93);transform-origin:0 0">LD_1</div>
<div class="a" style="left:730px;top:44px;width:198px;height:4px;background:#a8e2b9"></div>
<svg style="left:753px;top:16px;color:#1c1c1c" width="24" height="17"><use href="#code"/></svg>
<div class="t" style="left:797px;top:13px;font-size:24.5px;color:#1c1c1c;transform:scaleX(0.93);transform-origin:0 0">LD_2</div>
<div class="a" style="left:928px;top:44px;width:198px;height:4px;background:#f3d6c8"></div>
<svg style="left:951px;top:16px;color:#808080" width="24" height="17"><use href="#code"/></svg>
<div class="t" style="left:995px;top:13px;font-size:24.5px;color:#808080;transform:scaleX(0.93);transform-origin:0 0">LD_3</div>
<div class="a" style="left:1126px;top:44px;width:196px;height:4px;background:#f3d6c8"></div>
<svg style="left:1149px;top:16px;color:#808080" width="24" height="17"><use href="#code"/></svg>
<div class="t" style="left:1193px;top:13px;font-size:24.5px;color:#808080;transform:scaleX(0.93);transform-origin:0 0">ST_4</div>
<div class="a" style="left:1322px;top:44px;width:198px;height:4px;background:#f9a65c"></div>
<svg style="left:1345px;top:16px;color:#1c1c1c" width="24" height="17"><use href="#code"/></svg>
<div class="t" style="left:1389px;top:13px;font-size:24.5px;color:#1c1c1c;transform:scaleX(0.93);transform-origin:0 0">LD_4</div>
</div>
<div class="a" style="left:2083px;top:156px;width:13px;height:4px;background:#deeafd;"></div>
<svg style="left:2054px;top:129px;" width="12" height="11" viewBox="0 0 12 11"><path d="M0.7 0.7L11.3 10.3M11.3 0.7L0.7 10.3" stroke="#1c1c1c" stroke-width="1.6"/></svg>
<svg style="left:591px;top:170px;" width="32" height="32" viewBox="0 0 32 32"><path d="M16 0V32M0 16H32" stroke="#c8c8c8" stroke-width="4"/></svg>
<svg style="left:662px;top:170px;" width="27" height="32" viewBox="0 0 27 32"><path d="M13.5 2V32M1.5 13.5L13.5 1.5L25.5 13.5" fill="none" stroke="#c8c8c8" stroke-width="3.8"/></svg>
<svg style="left:731px;top:170px;" width="26" height="32" viewBox="0 0 26 32"><path d="M13 0V30M1 18.5L13 30.5L25 18.5" fill="none" stroke="#c8c8c8" stroke-width="3.8"/></svg>
<svg style="left:796px;top:170px;" width="32" height="32" viewBox="0 0 32 32"><path d="M17 1.5H6Q1.5 1.5 1.5 6V26Q1.5 30.5 6 30.5H26Q30.5 30.5 30.5 26V15" fill="none" stroke="#0a5fdc" stroke-width="2.8"/><path d="M29 2Q19 4 16.5 17L20.5 18.5L10 22L9 11L12.5 13Q16 3.5 29 2Z" fill="#0a5fdc"/></svg>
<svg style="left:864px;top:170px;" width="33" height="32" viewBox="0 0 33 32"><path d="M14 1.5H6Q1.5 1.5 1.5 6V26Q1.5 30.5 6 30.5H26Q30.5 30.5 30.5 26V19" fill="none" stroke="#0a5fdc" stroke-width="2.8"/><path d="M11 22Q12 8 24.5 5L22.5 1.5L33 2L29.5 13L27.5 9.5Q16.5 11 11 22Z" fill="#0a5fdc"/></svg>
<svg style="left:933px;top:170px;" width="32" height="32" viewBox="0 0 32 32"><g fill="none" stroke="#cfcfcf" stroke-width="2.5"><path d="M18 29.5Q16.5 30 15 30Q1.5 30 1.5 16Q1.5 2 15.5 2Q22 2 26 6.5"/><path d="M29.5 13Q30.5 16 30 19"/></g><polyline points="22.5,7 27,7 27,2" fill="none" stroke="#cfcfcf" stroke-width="2"/><text x="13.5" y="19" font-size="12" font-family="Liberation Sans" fill="#cfcfcf" text-anchor="middle">1</text><polygon points="20,13 32,21 20,29" fill="#cfcfcf"/></svg>
<div class="a" style="left:993px;top:174px;width:2px;height:24px;background:#c4c4c4;"></div>
<svg style="left:1023px;top:170px;" width="32" height="32" viewBox="0 0 32 32"><g fill="#2a78f8"><rect x="0" y="0" width="32" height="8"/><rect x="2" y="12" width="2.5" height="14"/><rect x="2" y="17.5" width="14" height="2.5"/><rect x="0" y="29.5" width="14" height="2.5"/><rect x="18" y="17.5" width="14" height="4.2" rx="2"/><rect x="22.9" y="13" width="4.2" height="19" rx="2"/></g><path d="M18 14.5L16.5 18" stroke="#2a78f8" stroke-width="1.5"/></svg>
<svg style="left:1091px;top:170px;" width="33" height="32" viewBox="0 0 33 32"><g fill="#2a78f8"><rect x="0" y="0" width="33" height="8"/><rect x="2" y="12" width="2.5" height="14"/><rect x="2" y="17.5" width="14" height="2.5"/><rect x="0" y="29.5" width="14.5" height="2.5"/><rect x="17" y="22.5" width="16" height="4.2" rx="2"/></g><path d="M20 14.5L18.5 18" stroke="#2a78f8" stroke-width="1.5"/></svg>
<svg style="left:1160px;top:170px;" width="32" height="32" viewBox="0 0 32 32"><g fill="#2a78f8"><rect x="0" y="0" width="32" height="8"/><rect x="0" y="12" width="32" height="8"/><rect x="0" y="24" width="32" height="8"/></g></svg>
<svg style="left:1229px;top:171px;" width="30" height="30" viewBox="0 0 30 30"><path d="M4.5 1.5H25.5Q28.5 1.5 28.5 4.5V16.5Q28.5 19.5 25.5 19.5H17L15 22.5L13 19.5H4.5Q1.5 19.5 1.5 16.5V4.5Q1.5 1.5 4.5 1.5Z" fill="none" stroke="#0a5fdc" stroke-width="2.3"/><g fill="#0a5fdc"><circle cx="8" cy="10.5" r="1.7"/><circle cx="15" cy="10.5" r="1.7"/><circle cx="22" cy="10.5" r="1.7"/><rect x="1" y="25.8" width="28" height="3.2" rx="1.6"/></g></svg>
<svg style="left:1297px;top:173px;" width="30" height="29" viewBox="0 0 30 29"><path d="M4.5 1.5H26Q29 1.5 29 4.5V21.5Q29 24.5 26 24.5H17L14 27.5L11 24.5H4.5Q1.5 24.5 1.5 21.5V4.5Q1.5 1.5 4.5 1.5Z" fill="none" stroke="#bcc3cc" stroke-width="2.3" stroke-linejoin="round"/><text x="20.5" y="17.5" font-size="19" font-family="Liberation Sans" fill="#bcc3cc" text-anchor="middle">*</text><path d="M14 6L8 20.5" stroke="#bcc3cc" stroke-width="2.2"/></svg>
<svg style="left:1366px;top:173px;" width="30" height="29" viewBox="0 0 30 29"><path d="M29 15.5V4.5Q29 1.5 26 1.5H4.5Q1.5 1.5 1.5 4.5V21.5Q1.5 24.5 4.5 24.5H11L14 27.5L16.5 25" fill="none" stroke="#bcc3cc" stroke-width="2.3" stroke-linejoin="round"/><text x="20.5" y="17.5" font-size="19" font-family="Liberation Sans" fill="#bcc3cc" text-anchor="middle">*</text><path d="M14 6L8 20.5" stroke="#bcc3cc" stroke-width="2.2"/><path d="M18.5 17L29 27.5M29 17L18.5 27.5" stroke="#bcc3cc" stroke-width="2.6"/></svg>
<svg style="left:1432px;top:169px;" width="34" height="34" viewBox="0 0 34 34"><path d="M17 1.5L21.6 11L31.8 12.4L24.4 19.6L26.2 30L17 25.1L7.8 30L9.6 19.6L2.2 12.4L12.4 11Z" fill="none" stroke="#2a78f8" stroke-width="2.4" stroke-linejoin="round"/></svg>
<div class="a" style="left:1493px;top:174px;width:2px;height:24px;background:#c4c4c4;"></div>
<svg style="left:1523px;top:170px;" width="33" height="32" viewBox="0 0 33 32"><g fill="none" stroke="#c8ccd2" stroke-width="2"><path d="M1 12V31H31V12H25"/><path d="M13 1H19V13H24L16 22L8 13H13Z"/></g><g fill="none" stroke="#c8ccd2" stroke-width="1.6"><line x1="6" y1="20" x2="6" y2="27"/><line x1="10" y1="20" x2="10" y2="27"/><circle cx="25" cy="23.5" r="2.5"/></g></svg>
<svg style="left:1591px;top:175px;" width="34" height="22" viewBox="0 0 34 22"><g fill="none" stroke="#2a78f8" stroke-width="2"><circle cx="7.5" cy="14" r="6.3"/><circle cx="26.5" cy="14" r="6.3"/><path d="M13.8 14H20.2"/><path d="M2.5 9.5Q2.5 5.5 6 5.5H28Q31.5 5.5 31.5 9.5"/><path d="M7.5 5.5Q7.5 1.5 10.5 1.5H12Q14.5 1.5 14.5 5.5M19.5 5.5Q19.5 1.5 22 1.5H23.5Q26.5 1.5 26.5 5.5"/><path d="M4.5 12Q5.5 9.5 8.5 9.5M23.5 12Q24.5 9.5 27.5 9.5" stroke-width="1.3"/></g></svg>
<div class="a" style="left:1652px;top:174px;width:2px;height:24px;background:#c4c4c4;"></div>
<svg style="left:1683px;top:172px;" width="30" height="28" viewBox="0 0 30 28"><rect x="3.5" y="1.5" width="23" height="25" rx="3.5" fill="none" stroke="#0a5fdc" stroke-width="2.8"/><rect x="0" y="12.5" width="30" height="3" rx="1.5" fill="#3a3ea0"/></svg>
<svg style="left:1751px;top:172px;" width="31" height="28" viewBox="0 0 31 28"><path d="M4 26V4.5Q4 1.5 7 1.5H23.5Q26.5 1.5 26.5 4.5L27 26" fill="none" stroke="#0a5fdc" stroke-width="2.8"/><rect x="0" y="24.8" width="31" height="3" rx="1.5" fill="#3a3ea0"/></svg>
<svg style="left:1820px;top:172px;" width="30" height="28" viewBox="0 0 30 28"><path d="M3.5 2V23.5Q3.5 26.5 6.5 26.5H23Q26 26.5 26 23.5V2" fill="none" stroke="#0a5fdc" stroke-width="2.8"/><rect x="0" y="0" width="30" height="3" rx="1.5" fill="#3a3ea0"/></svg>
<svg style="left:2037px;top:169px;" width="32" height="32" viewBox="0 0 32 32"><circle cx="13" cy="13" r="11" fill="none" stroke="#0a5fdc" stroke-width="2.8"/><path d="M21 21L29.5 29.5" stroke="#0a5fdc" stroke-width="3.6" stroke-linecap="round"/><path d="M7.5 11Q8 7.5 11.5 6.5" fill="none" stroke="#0a5fdc" stroke-width="1.8"/></svg>
<svg style="left:619px;top:216px;" width="37" height="36" viewBox="0 0 37 36"><polygon points="36,0 36,36 0,36" fill="#c9dcf8"/></svg>
<div class="a" style="left:563px;top:308px;width:1524px;height:48px;background:#f7fafe;"></div>
<div class="a" style="left:563px;top:405px;width:1524px;height:36px;background:#f7fafe;"></div>
<div class="a" style="left:563px;top:260px;width:1524px;height:14px;background:linear-gradient(#d9dce2,rgba(255,255,255,0))"></div>
<div class="a" style="left:662px;top:212px;width:2px;height:229px;background:#c8daf6;"></div>
<div class="a" style="left:1064px;top:212px;width:2px;height:229px;background:#c8daf6;"></div>
<div class="a" style="left:1385px;top:212px;width:2px;height:229px;background:#c8daf6;"></div>
<div class="a" style="left:1707px;top:212px;width:2px;height:229px;background:#c8daf6;"></div>
<div class="a" style="left:1795px;top:212px;width:2px;height:229px;background:#c8daf6;"></div>
<div class="t" style="left:722px;top:226px;font-size:24px;color:#1c1c1c;">名称</div>
<div class="t" style="left:1085px;top:226px;font-size:24px;color:#1c1c1c;">数据类型</div>
<div class="t" style="left:1407px;top:226px;font-size:24px;color:#1c1c1c;">初始值</div>
<div class="t" style="left:1728px;top:226px;font-size:24px;color:#1c1c1c;">保持</div>
<div class="t" style="left:1817px;top:226px;font-size:24px;color:#1c1c1c;">注释</div>
<svg style="left:686px;top:279.5px;" width="15" height="9" viewBox="0 0 15 9"><polyline points="1,1 7.5,7.5 14,1" fill="none" stroke="#2a78f8" stroke-width="2.2"/></svg>
<div class="t" style="left:723px;top:272px;font-size:25px;color:#2a7cf6;">VAR</div>
<div class="t" style="left:628px;top:320px;font-size:26.5px;color:#1c1c1c;">1</div>
<svg style="left:721px;top:327.5px;" width="9" height="9" viewBox="0 0 9 9"><circle cx="4.5" cy="4.5" r="4" fill="#8ab8f8"/></svg>
<div class="t" style="left:757px;top:318px;font-size:27px;color:#1c1c1c;">OUT</div>
<div class="t" style="left:1083px;top:318px;font-size:27px;color:#1c1c1c;">DT</div>
<div class="t" style="left:1408px;top:318px;font-size:27px;color:#b4b4b4;">DT#1970-1-1-0:0:0</div>
<svg style="left:1739px;top:320px;" width="24" height="24" viewBox="0 0 24 24"><rect x="1" y="1" width="22" height="22" rx="5" fill="#fff" stroke="#2a78f8" stroke-width="2"/></svg>
<div class="t" style="left:628px;top:368px;font-size:26.5px;color:#1c1c1c;">2</div>
<svg style="left:721px;top:375.5px;" width="9" height="9" viewBox="0 0 9 9"><circle cx="4.5" cy="4.5" r="4" fill="#8ab8f8"/></svg>
<div class="t" style="left:757px;top:366px;font-size:27px;color:#1c1c1c;">IN1</div>
<div class="t" style="left:1083px;top:366px;font-size:27px;color:#1c1c1c;">DINT</div>
<div class="t" style="left:1408px;top:366px;font-size:27px;color:#111;">2024</div>
<svg style="left:1739px;top:368px;" width="24" height="24" viewBox="0 0 24 24"><rect x="1" y="1" width="22" height="22" rx="5" fill="#fff" stroke="#2a78f8" stroke-width="2"/></svg>
<div class="t" style="left:628px;top:416px;font-size:26.5px;color:#1c1c1c;">3</div>
<svg style="left:721px;top:423.5px;" width="9" height="9" viewBox="0 0 9 9"><circle cx="4.5" cy="4.5" r="4" fill="#8ab8f8"/></svg>
<div class="t" style="left:757px;top:414px;font-size:27px;color:#1c1c1c;">IN2</div>
<div class="t" style="left:1083px;top:414px;font-size:27px;color:#1c1c1c;">DINT</div>
<div class="t" style="left:1408px;top:414px;font-size:27px;color:#111;">10</div>
<svg style="left:1739px;top:416px;" width="24" height="24" viewBox="0 0 24 24"><rect x="1" y="1" width="22" height="22" rx="5" fill="#fff" stroke="#2a78f8" stroke-width="2"/></svg>
<div class="a" style="left:563px;top:441px;width:1420px;height:12px;background:#c8c8c8;border-radius:6px"></div>
<div class="a" style="left:563px;top:441px;width:1533px;height:13px;background:transparent;"></div>
<div class="a" style="left:2087px;top:261px;width:9px;height:50px;background:#cfcfcf;border-radius:4px"></div>
<div class="a" style="left:563px;top:521px;width:1533px;height:1px;background:#c0c6d2;"></div>
<svg style="left:575px;top:484px;" width="17" height="22" viewBox="0 0 17 22"><path d="M2 1V21" stroke="#808080" stroke-width="2.6" stroke-linecap="round"/><polyline points="15.5,2 5,11 15.5,20" fill="none" stroke="#808080" stroke-width="2.6" stroke-linecap="round" stroke-linejoin="round"/></svg>
<svg style="left:623px;top:485px;" width="13" height="20" viewBox="0 0 13 20"><polyline points="11.5,1.5 2,10 11.5,18.5" fill="none" stroke="#808080" stroke-width="2.6" stroke-linecap="round" stroke-linejoin="round"/></svg>
<svg style="left:663px;top:481px;" width="33" height="28" viewBox="0 0 33 28"><rect x="5.5" y="1" width="22" height="26" fill="none" stroke="#1c1c1c" stroke-width="2"/><g fill="#1c1c1c"><rect x="0.5" y="6.8" width="5" height="2.4"/><rect x="0.5" y="15.8" width="5" height="2.4"/><rect x="27.5" y="6.8" width="5" height="2.4"/><rect x="15.6" y="7" width="1.8" height="15"/><rect x="12.5" y="6" width="8" height="1.5"/><rect x="12.5" y="21.5" width="8" height="1.5"/></g></svg>
<svg style="left:741px;top:479px;" width="22" height="27" viewBox="0 0 22 27"><path d="M2 1V18.5H19" fill="none" stroke="#1c1c1c" stroke-width="2.4"/><polyline points="12,11.5 19.5,18.5 12,25.5" fill="none" stroke="#1c1c1c" stroke-width="3" stroke-linejoin="miter"/></svg>
<svg style="left:807px;top:484px;" width="31" height="22" viewBox="0 0 31 22"><path d="M1 20H22V3" fill="none" stroke="#1c1c1c" stroke-width="2.4"/><polyline points="15,9 22,2 29,9" fill="none" stroke="#1c1c1c" stroke-width="3"/></svg>
<svg style="left:880px;top:489px;" width="30" height="18" viewBox="0 0 30 18"><g fill="#1c1c1c"><rect x="0.2" y="1" width="5.6" height="2.1"/><rect x="4.2" y="1" width="2.4" height="12.6"/><rect x="4.2" y="11.6" width="9.6" height="2"/><rect x="11.1" y="6" width="2.7" height="10.7"/><rect x="17" y="6" width="2.8" height="10.7"/><rect x="17" y="11.6" width="8" height="2"/><rect x="22.8" y="1" width="2.6" height="12.6"/><rect x="22.8" y="1" width="6" height="2.1"/></g></svg>
<svg style="left:953px;top:481px;" width="32" height="28" viewBox="0 0 32 28"><g fill="#1c1c1c"><rect x="0" y="11.5" width="11" height="2.6"/><rect x="21" y="11.5" width="11" height="2.6"/><rect x="10.5" y="1" width="2.8" height="26"/><rect x="18.5" y="1" width="2.8" height="26"/></g></svg>
<svg style="left:1025px;top:481px;" width="33" height="28" viewBox="0 0 33 28"><g fill="#1c1c1c"><rect x="0" y="11.5" width="9.5" height="2.6"/><rect x="24" y="11.5" width="9.5" height="2.6"/><rect x="8.5" y="1" width="2.8" height="26"/><rect x="21.5" y="1" width="2.8" height="26"/></g><path d="M19.5 3.5L13.5 24" stroke="#1c1c1c" stroke-width="2.2"/></svg>
<svg style="left:1097px;top:481px;" width="33" height="31" viewBox="0 0 33 31"><text x="16.5" y="11.5" font-size="13" font-weight="bold" font-family="Liberation Sans" text-anchor="middle" fill="#1c1c1c" transform="translate(16.5 0) scale(0.85 1) translate(-16.5 0)">NOT</text><g fill="#1c1c1c"><rect x="0" y="18.5" width="8" height="2.6"/><rect x="25" y="18.5" width="8" height="2.6"/><rect x="6.5" y="13.5" width="2.8" height="16"/><rect x="23.5" y="13.5" width="2.8" height="16"/></g></svg>
<svg style="left:1169px;top:481px;" width="33" height="28" viewBox="0 0 33 28"><g fill="none" stroke="#1c1c1c" stroke-width="2"><path d="M0.5 12.5H9M24 12.5H32.5" stroke-width="2.6"/><path d="M14.5 1Q8 6 8 12.5Q8 19 14.5 26"/><path d="M18.5 1Q25 6 25 12.5Q25 19 18.5 26"/></g></svg>
<svg style="left:1242px;top:481px;" width="33" height="28" viewBox="0 0 33 28"><g fill="none" stroke="#1c1c1c" stroke-width="2"><path d="M0.5 12.5H8M25 12.5H32.5" stroke-width="2.6"/><path d="M13.5 1Q7.5 6 7.5 12.5Q7.5 19 13.5 26"/><path d="M19.5 1Q25.5 6 25.5 12.5Q25.5 19 19.5 26"/><path d="M20 2L13.5 23.5"/></g></svg>
<svg style="left:1977px;top:485px;" width="13" height="20" viewBox="0 0 13 20"><polyline points="1.5,1.5 11,10 1.5,18.5" fill="none" stroke="#808080" stroke-width="2.6" stroke-linecap="round" stroke-linejoin="round"/></svg>
<svg style="left:2020px;top:484px;" width="17" height="22" viewBox="0 0 17 22"><path d="M14.5 1.5V20.5" stroke="#808080" stroke-width="2.6" stroke-linecap="round"/><polyline points="2,2 11.5,11 2,20" fill="none" stroke="#808080" stroke-width="2.6" stroke-linecap="round" stroke-linejoin="round"/></svg>
<svg style="left:2063px;top:481px;" width="25" height="28" viewBox="0 0 25 28"><g fill="none" stroke="#1c1c1c" stroke-width="2.5"><path d="M2 7H23.5"/><polyline points="7.5,1.5 2,7 7.5,12.5"/><path d="M2 20.5H23.5"/><polyline points="17.5,15 23,20.5 17.5,26"/></g></svg>
<div class="a" style="left:563px;top:522px;width:45px;height:426px;background:#f7fbff;"></div>
<div class="a" style="left:608px;top:522px;width:2px;height:426px;background:#dce8fc;"></div>
<div class="a" style="left:610px;top:522px;width:1462px;height:48px;background:#f7f7f7;"></div>
<div class="a" style="left:662px;top:526px;width:361px;height:40px;background:#fafafa;border-radius:8px;border:1px solid #f0f0f0"></div>
<svg style="left:624px;top:542px;" width="15" height="9" viewBox="0 0 15 9"><polyline points="1,1 7.5,7.5 14,1" fill="none" stroke="#444" stroke-width="2"/></svg>
<div class="t" style="left:665px;top:531px;font-size:23.5px;color:#2a7cf6;">程序段<span style="font-size:25px;position:relative;top:0px">&nbsp;&nbsp;1</span></div>
<div class="a" style="left:563px;top:947px;width:1509px;height:2px;background:#c8c8c8;"></div>
<div class="a" style="left:2071px;top:522px;width:1px;height:1295px;background:#dcdcdc;"></div>
<div class="t m" style="left:578px;top:724px;font-size:24px;color:#111;font-weight:bold">1</div>
<div class="a" style="left:648px;top:609px;width:3px;height:301px;background:#111;"></div>
<div class="a" style="left:651px;top:689px;width:367px;height:3px;background:#111;"></div>
<div class="a" style="left:1267px;top:689px;width:411px;height:3px;background:#111;"></div>
<div class="a" style="left:1676px;top:678px;width:3px;height:24px;background:#111;"></div>
<div class="a" style="left:1018px;top:634px;width:249px;height:275px;background:#f3f7fe;border:2px solid #b6d0f6"></div>
<div class="a" style="left:1020px;top:636px;width:245px;height:30px;background:#dde9fc;"></div>
<div class="t m" style="left:1142px;top:639.5px;font-size:23px;color:#111;-webkit-text-stroke:0.35px #111;transform:translateX(-50%)">CONCAT_DT</div>
<div class="a" style="left:1102px;top:690px;width:82px;height:2px;background:#111;"></div>
<div class="t m" style="left:1026px;top:679px;font-size:23px;color:#111;-webkit-text-stroke:0.35px #111;">EN</div>
<div class="t m" style="left:1026px;top:712.6px;font-size:23px;color:#111;-webkit-text-stroke:0.35px #111;">YEAR</div>
<div class="t m" style="left:1026px;top:744.8000000000001px;font-size:23px;color:#111;-webkit-text-stroke:0.35px #111;">MONTH</div>
<div class="t m" style="left:1026px;top:777.0px;font-size:23px;color:#111;-webkit-text-stroke:0.35px #111;">DAY</div>
<div class="t m" style="left:1026px;top:809.2px;font-size:23px;color:#111;-webkit-text-stroke:0.35px #111;">HOUR</div>
<div class="t m" style="left:1026px;top:841.4000000000001px;font-size:23px;color:#111;-webkit-text-stroke:0.35px #111;">MINUTE</div>
<div class="t m" style="left:1026px;top:873.6px;font-size:23px;color:#111;-webkit-text-stroke:0.35px #111;">SECOND</div>
<div class="t m" style="left:1259px;top:679px;font-size:23px;color:#111;-webkit-text-stroke:0.35px #111;transform:translateX(-100%)">ENO</div>
<div class="a" style="left:967px;top:718px;width:51px;height:3px;background:#8cb6f8;"></div>
<div class="t m" style="left:960px;top:711.2px;font-size:23px;color:#111;-webkit-text-stroke:0.35px #111;transform:translateX(-100%)">IN1</div>
<div class="a" style="left:967px;top:751px;width:51px;height:3px;background:#8cb6f8;"></div>
<div class="t m" style="left:960px;top:743.5px;font-size:23px;color:#111;-webkit-text-stroke:0.35px #111;transform:translateX(-100%)">IN2</div>
<div class="a" style="left:967px;top:783px;width:51px;height:3px;background:#8cb6f8;"></div>
<div class="t m" style="left:960px;top:775.8000000000001px;font-size:23px;color:#111;-webkit-text-stroke:0.35px #111;transform:translateX(-100%)">IN3</div>
<div class="a" style="left:967px;top:815px;width:51px;height:3px;background:#8cb6f8;"></div>
<div class="t m" style="left:960px;top:808.1px;font-size:23px;color:#111;-webkit-text-stroke:0.35px #111;transform:translateX(-100%)">IN4</div>
<div class="a" style="left:967px;top:847px;width:51px;height:3px;background:#8cb6f8;"></div>
<div class="t m" style="left:960px;top:840.4000000000001px;font-size:23px;color:#111;-webkit-text-stroke:0.35px #111;transform:translateX(-100%)">IN5</div>
<div class="a" style="left:967px;top:879px;width:51px;height:3px;background:#8cb6f8;"></div>
<div class="t m" style="left:960px;top:872.7px;font-size:23px;color:#111;-webkit-text-stroke:0.35px #111;transform:translateX(-100%)">IN6</div>
<div class="a" style="left:1267px;top:718px;width:51px;height:3px;background:#8cb6f8;"></div>
<div class="t m" style="left:1325px;top:710.6px;font-size:23px;color:#111;-webkit-text-stroke:0.35px #111;">OUT</div>
<div class="t" style="left:2119px;top:127.5px;font-size:23.5px;color:#1c1c1c;">在线工具</div>
<svg style="left:2416px;top:133px;" width="25" height="19" viewBox="0 0 25 19"><g fill="#2a7cf6"><rect x="0" y="0" width="10" height="2.8"/><rect x="0" y="8" width="10" height="2.8"/><rect x="0" y="15.5" width="24.5" height="3"/><polygon points="12,0 24,0 18,7.5"/></g></svg>
<div class="t" style="left:2129px;top:180px;font-size:24.5px;color:#1c1c1c;transform:scaleX(0.8);transform-origin:0 0">PLC_1</div>
<div class="a" style="left:2100px;top:220px;width:372px;height:4px;background:#faa868;"></div>
<div class="a" style="left:2100px;top:220px;width:119px;height:4px;background:#ff7000;"></div>
<div class="a" style="left:2100px;top:228px;width:370px;height:44px;background:#d6e5fc;border-radius:10px"></div>
<div class="t" style="left:2121px;top:239px;font-size:23.5px;color:#2a7cf6;"><span style="font-size:25px;position:relative;top:0px">CPU </span>控制器</div>
<svg style="left:2432px;top:246px;" width="20" height="11" viewBox="0 0 20 11"><polyline points="1,1 10,9.5 19,1" fill="none" stroke="#2a7cf6" stroke-width="2"/></svg>
<div class="a" style="left:2108px;top:276px;width:354px;height:45px;background:#eef0f5;border-radius:8px"></div>
<div class="t" style="left:2119px;top:276px;font-size:20px;color:#1c1c1c;"><span style="font-size:21px;position:relative;top:0px">PLC_1(</span>仿</div>
<div class="t" style="left:2119px;top:299px;font-size:20px;color:#1c1c1c;">真<span style="font-size:21px;position:relative;top:0px">)</span></div>
<div class="t" style="left:2232px;top:287px;font-size:24.5px;color:#1c1c1c;">CPU T324-XP-CD...</div>
<div class="a" style="left:2123px;top:337px;width:24px;height:24px;background:#c8c8c8;border-radius:5px"></div>
<div class="t" style="left:2160px;top:337px;font-size:26px;color:#1c1c1c;transform:scaleX(1);transform-origin:0 0">RUN/STOP</div>
<div class="a" style="left:2123px;top:449px;width:24px;height:24px;background:#c8c8c8;border-radius:5px"></div>
<div class="t" style="left:2160px;top:448px;font-size:26px;color:#1c1c1c;transform:scaleX(0.92);transform-origin:0 0">ERROR</div>
<div class="a" style="left:2123px;top:505px;width:24px;height:24px;background:#c8c8c8;border-radius:5px"></div>
<div class="t" style="left:2160px;top:503px;font-size:26px;color:#1c1c1c;transform:scaleX(0.917);transform-origin:0 0">DEFECTIVE</div>
<div class="a" style="left:2320px;top:326px;width:128px;height:47px;background:#cfe0fb;border:2px solid #8ab4f8;border-radius:7px"></div>
<div class="t" style="left:2384px;top:337.5px;font-size:22px;color:#0b5ed7;transform:translateX(-50%)">RUN</div>
<div class="a" style="left:2320px;top:382px;width:128px;height:47px;background:#f2f2f5;border:2px solid #d2d2d2;border-radius:7px"></div>
<div class="t" style="left:2384px;top:393.5px;font-size:22px;color:#b4b4b4;transform:translateX(-50%)">STOP</div>
<svg style="left:2494px;top:132px;" width="33" height="33" viewBox="0 0 33 33"><g fill="none" stroke-width="2.5"><rect x="1.2" y="1.2" width="12" height="10.5" rx="3.5" stroke="#0a5fdc"/><rect x="19.2" y="1.2" width="12.5" height="14" rx="3.5" stroke="#2d3595"/><rect x="1.2" y="17" width="12" height="14.5" rx="3.5" stroke="#2d3595"/><rect x="19.2" y="21" width="12.5" height="10.5" rx="3.5" stroke="#0a5fdc"/></g></svg>
<div class="a" style="left:2476px;top:184px;width:67px;height:71px;background:#fde4d0;"></div>
<div class="a" style="left:2476px;top:184px;width:65px;height:2px;background:#f2a870;"></div>
<div class="a" style="left:2540px;top:184px;width:3px;height:71px;background:#ff7000;"></div>
<svg style="left:2492px;top:204px;" width="33" height="32" viewBox="0 0 33 32"><rect x="12" y="0" width="20" height="24" rx="1.5" fill="#ff7000"/><g stroke="#fff" stroke-width="1.1" fill="none"><line x1="19.5" y1="3" x2="19.5" y2="11"/><line x1="22" y1="3.5" x2="22" y2="11"/><rect x="24.6" y="4" width="4" height="7"/></g><g stroke="#fff" stroke-width="1.2" stroke-dasharray="1.2 1.2"><line x1="20" y1="14.2" x2="29" y2="14.2"/><line x1="20" y1="17.6" x2="29" y2="17.6"/><line x1="20" y1="21" x2="29" y2="21"/></g><path d="M3.5 8V4.5Q3.5 3 5 3H8" fill="none" stroke="#ffa000" stroke-width="1.8"/><path d="M29 25.5V27Q29 28.5 27.5 28.5H25" fill="none" stroke="#ffa000" stroke-width="1.8"/><rect x="1" y="12" width="19" height="13.5" rx="1.5" fill="#ff7000" stroke="#ffa000" stroke-width="1.8"/><rect x="7.5" y="27" width="5" height="5" fill="#ff7000"/><rect x="1" y="29.3" width="5" height="1.8" fill="#ff7000"/><rect x="14" y="29.3" width="5" height="1.8" fill="#ff7000"/></svg>
<div class="t" style="left:33px;top:1888.5px;font-size:23.5px;color:#ffffff;">语言服务空闲</div>
<svg style="left:203px;top:1886px;" width="24" height="24" viewBox="0 0 24 24"><circle cx="12" cy="12" r="10.5" fill="none" stroke="#fff" stroke-width="1.8"/><path d="M8 8L16 16M16 8L8 16" stroke="#fff" stroke-width="1.8"/></svg>
<div class="t" style="left:236px;top:1888px;font-size:24px;color:#ffffff;">36</div>
<svg style="left:269px;top:1886px;" width="25" height="23" viewBox="0 0 25 23"><path d="M12.5 1.5L23.5 21.5H1.5Z" fill="none" stroke="#fff" stroke-width="1.8" stroke-linejoin="round"/><path d="M12.5 8V15" stroke="#fff" stroke-width="1.8"/><circle cx="12.5" cy="18" r="1.1" fill="#fff"/></svg>
<div class="t" style="left:301px;top:1888px;font-size:24px;color:#ffffff;">0</div>
<div class="t" style="left:339px;top:1888px;font-size:24px;color:#ffffff;">ClientID-84a93a48-f5cf-41fb-bd01-0bedaf43d896</div>
<svg style="left:2216px;top:1883px;" width="24" height="28" viewBox="0 0 24 28"><path d="M3 21.5V13Q3 6 10 5Q11.5 5 12.5 5.3" fill="none" stroke="#fff" stroke-width="1.8"/><path d="M18 13V21.5" stroke="#fff" stroke-width="1.8"/><path d="M1 21.5H20" stroke="#fff" stroke-width="1.8"/><path d="M8 24Q10.5 27 13 24" fill="#fff" stroke="#fff" stroke-width="1.5"/><circle cx="17.5" cy="7.5" r="5.5" fill="#fff"/></svg>
<div class="t" style="left:2246px;top:1887px;font-size:23px;color:#ffffff;">6</div>
<svg style="left:2285px;top:1887px;" width="26" height="22" viewBox="0 0 26 22"><rect x="1" y="1" width="24" height="20" fill="none" stroke="#fff" stroke-width="1.8"/><path d="M1 6.5H25" stroke="#fff" stroke-width="1.8"/></svg>
<svg style="left:2335px;top:1878px;" width="34" height="33" viewBox="0 0 34 33"><g fill="none" stroke="#fff" stroke-width="1.5"><rect x="13.5" y="0.8" width="19.5" height="23" rx="1"/><rect x="0.8" y="12.5" width="19" height="14" rx="2" fill="#0078d0"/><polyline points="5.5,19 9,22.5 15,16.5"/></g><g fill="#fff"><rect x="19.5" y="4" width="1.3" height="8"/><rect x="23" y="4" width="1.3" height="8"/><rect x="26" y="4" width="4.5" height="8" fill="none" stroke="#fff" stroke-width="1.2"/><rect x="8" y="26.5" width="4.5" height="5"/><rect x="1" y="29" width="5" height="1.5"/><rect x="14.5" y="29" width="5" height="1.5"/></g><g stroke="#fff" stroke-width="1.3" stroke-dasharray="1.3 1.2"><line x1="22" y1="14.5" x2="31" y2="14.5"/><line x1="22" y1="18" x2="31" y2="18"/><line x1="22" y1="21.5" x2="31" y2="21.5"/></g></svg>
<div class="t" style="left:2388px;top:1885.5px;font-size:22px;color:#ffffff;">在线设备</div>
<svg style="left:2498px;top:1884px;" width="13" height="25" viewBox="0 0 13 25"><polygon points="5.5,1 12,1 12,24 6,24 6,8 1,10 1,5" fill="#fff"/></svg>
<div class="a" style="left:2335px;top:1913px;width:180px;height:2px;background:#ffffff;"></div>
<div class="a" style="left:2543px;top:0px;width:1px;height:1922px;background:#e2e2e2;"></div>
<div class="a" style="left:3px;top:1873px;width:2540px;height:1px;background:#eef4fd;"></div>
</body></html>
